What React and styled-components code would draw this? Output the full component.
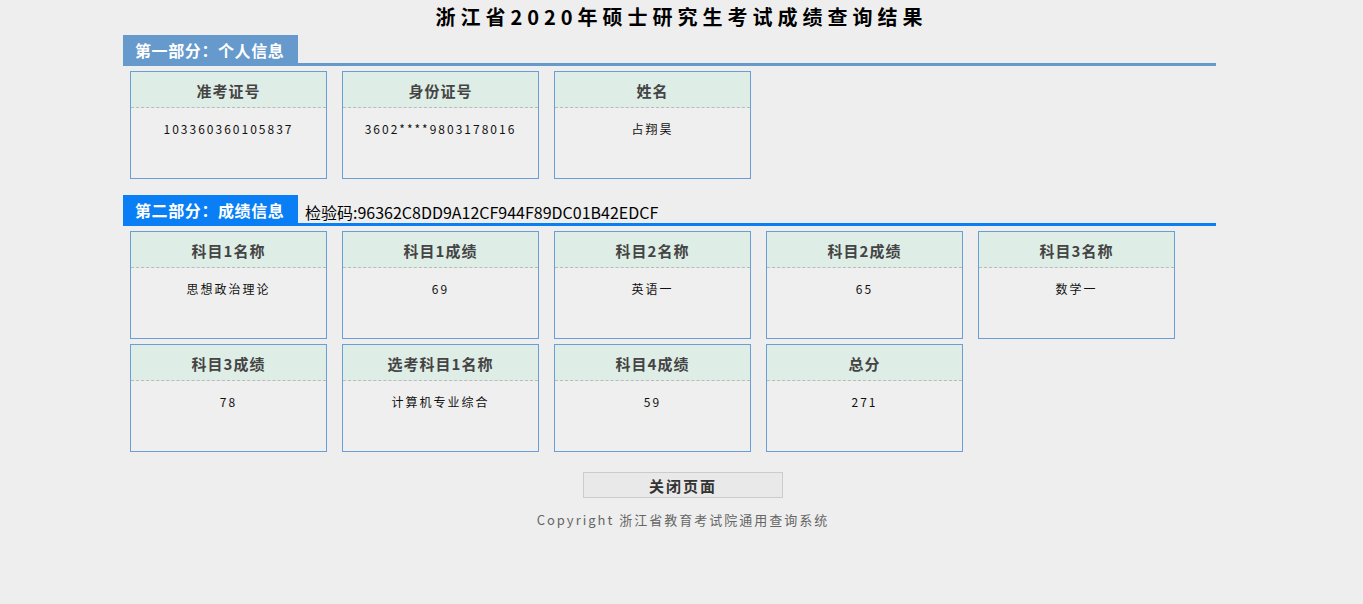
import React from "react"
import styled, { createGlobalStyle } from "styled-components"

const GlobalStyle = createGlobalStyle`
  html, body {
    margin: 0;
    padding: 0;
    background: #eeeeee;
    font-family: "Noto Sans CJK SC", "Noto Sans", sans-serif;
  }
`

const Page = styled.div`
  min-height: 604px;
  background: #eeeeee;
`

const Title = styled.h1`
  margin: 0 0 3px;
  height: 32px;
  line-height: 33px;
  text-align: center;
  font-size: 20px;
  font-weight: bold;
  letter-spacing: 5px;
  color: #000;
`

const Main = styled.div`
  width: 1093px;
  margin-left: 123px;
`

const Section = styled.section`
  margin-bottom: ${props => props.$gap || 0}px;
`

const SectionHead = styled.div`
  display: flex;
  align-items: flex-end;
  border-bottom: 3px solid ${props => props.$color};
`

const Tab = styled.div`
  width: 175px;
  box-sizing: border-box;
  height: 28px;
  line-height: 30px;
  padding-left: 12px;
  background: ${props => props.$color};
  color: #fff;
  font-size: 16px;
  font-weight: bold;
  letter-spacing: 0.6px;
`

const Code = styled.span`
  margin-left: 7px;
  font-size: 16px;
  line-height: 22px;
  color: #000;
`

const Cards = styled.div`
  display: flex;
  flex-wrap: wrap;
  gap: 5px 15px;
  padding: 5px 7px 0;
`

const Card = styled.div`
  width: 197px;
  height: 108px;
  box-sizing: border-box;
  border: 1px solid #6a9ed6;
  background: #efefef;
`

const CardHead = styled.div`
  height: 35px;
  line-height: 37px;
  text-align: center;
  background: #deede6;
  border-bottom: 1px dashed #bbbbbb;
  font-size: 15px;
  font-weight: bold;
  letter-spacing: 1px;
  color: #444;
`

const CardValue = styled.div`
  padding-top: 11px;
  line-height: 20px;
  text-align: center;
  font-size: 12px;
  letter-spacing: 2px;
  color: #111;
`

const Footer = styled.div`
  display: flex;
  flex-direction: column;
  align-items: center;
  padding-top: 20px;
`

const CloseButton = styled.button`
  width: 200px;
  height: 26px;
  padding: 0;
  margin-left: 3px;
  border: 1px solid #cccccc;
  background: #e9e9e9;
  font-family: inherit;
  font-size: 15px;
  font-weight: bold;
  letter-spacing: 2px;
  color: #333;
  cursor: pointer;
`

const Copyright = styled.p`
  margin: 12px 0 0 3px;
  line-height: 20px;
  font-size: 13px;
  letter-spacing: 2px;
  color: #666;
`

const personal = [
  ["准考证号", "103360360105837"],
  ["身份证号", "3602****9803178016"],
  ["姓名", "占翔昊"],
]

const scores = [
  ["科目1名称", "思想政治理论"],
  ["科目1成绩", "69"],
  ["科目2名称", "英语一"],
  ["科目2成绩", "65"],
  ["科目3名称", "数学一"],
  ["科目3成绩", "78"],
  ["选考科目1名称", "计算机专业综合"],
  ["科目4成绩", "59"],
  ["总分", "271"],
]

const InfoCards = ({ items }) => (
  <Cards>
    {items.map(([label, value]) => (
      <Card key={label}>
        <CardHead>{label}</CardHead>
        <CardValue>{value}</CardValue>
      </Card>
    ))}
  </Cards>
)

export default function App() {
  return (
    <Page>
      <GlobalStyle />
      <Title>浙江省2020年硕士研究生考试成绩查询结果</Title>
      <Main>
        <Section $gap={16}>
          <SectionHead $color="#6699cc">
            <Tab $color="#6699cc">第一部分：个人信息</Tab>
          </SectionHead>
          <InfoCards items={personal} />
        </Section>
        <Section>
          <SectionHead $color="#0a7ff5">
            <Tab $color="#0a7ff5">第二部分：成绩信息</Tab>
            <Code>检验码:96362C8DD9A12CF944F89DC01B42EDCF</Code>
          </SectionHead>
          <InfoCards items={scores} />
        </Section>
      </Main>
      <Footer>
        <CloseButton type="button">关闭页面</CloseButton>
        <Copyright>Copyright 浙江省教育考试院通用查询系统</Copyright>
      </Footer>
    </Page>
  )
}
